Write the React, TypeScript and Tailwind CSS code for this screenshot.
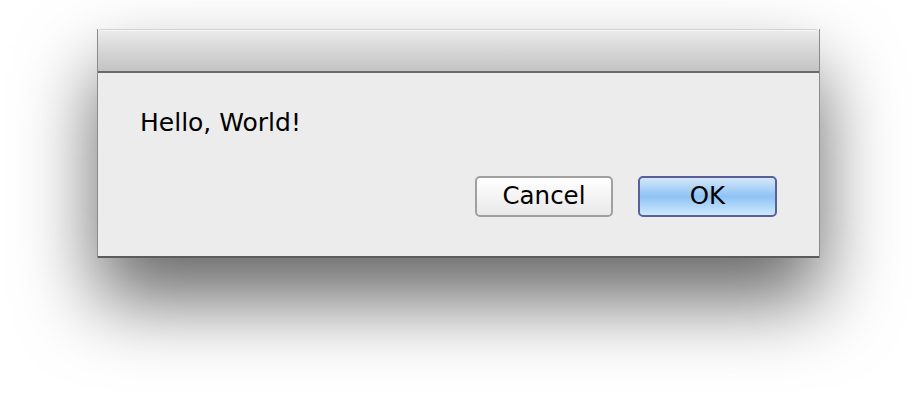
import React from 'react';

export default function App() {
  return (
    <div className="w-[917px] h-[399px] bg-white overflow-hidden pt-[29px] pl-[97px] font-['DejaVu_Sans',sans-serif]">
      <div className="w-[723px] h-[229px] flex flex-col shadow-[0_42px_78px_rgba(0,0,0,0.6)] border-x border-[#8a8a8a]">
        {/* title bar */}
        <div className="h-[42px] rounded-t-[4px] border-t border-[#d2d2d2] bg-gradient-to-b from-[#ececec] via-[#d6d6d6] to-[#c4c4c4] shadow-[inset_0_1px_0_#f6f6f6]" />
        <div className="h-[2px] bg-[#6a6a6a]" />
        {/* body */}
        <div className="flex-1 bg-[#ececec] border-b-2 border-[#5c5c5c] flex flex-col px-[42px] pt-[35px]">
          <p className="text-[25px] leading-[30px] text-black">Hello, World!</p>
          <div className="mt-[38px] flex justify-end gap-[25px]">
            <button className="w-[138px] h-[41px] rounded-[5px] border-2 border-[#a0a0a0] bg-gradient-to-b from-white via-[#f4f4f4] to-[#e8e8e8] text-[24.5px] leading-none text-black">
              Cancel
            </button>
            <button className="w-[139px] h-[41px] rounded-[5px] border-2 border-[#5a5f9a] bg-gradient-to-b from-[#d4e7fb] via-[#8ec3f4] to-[#cde9fd] text-[24.5px] leading-none text-black">
              OK
            </button>
          </div>
        </div>
      </div>
    </div>
  );
}
